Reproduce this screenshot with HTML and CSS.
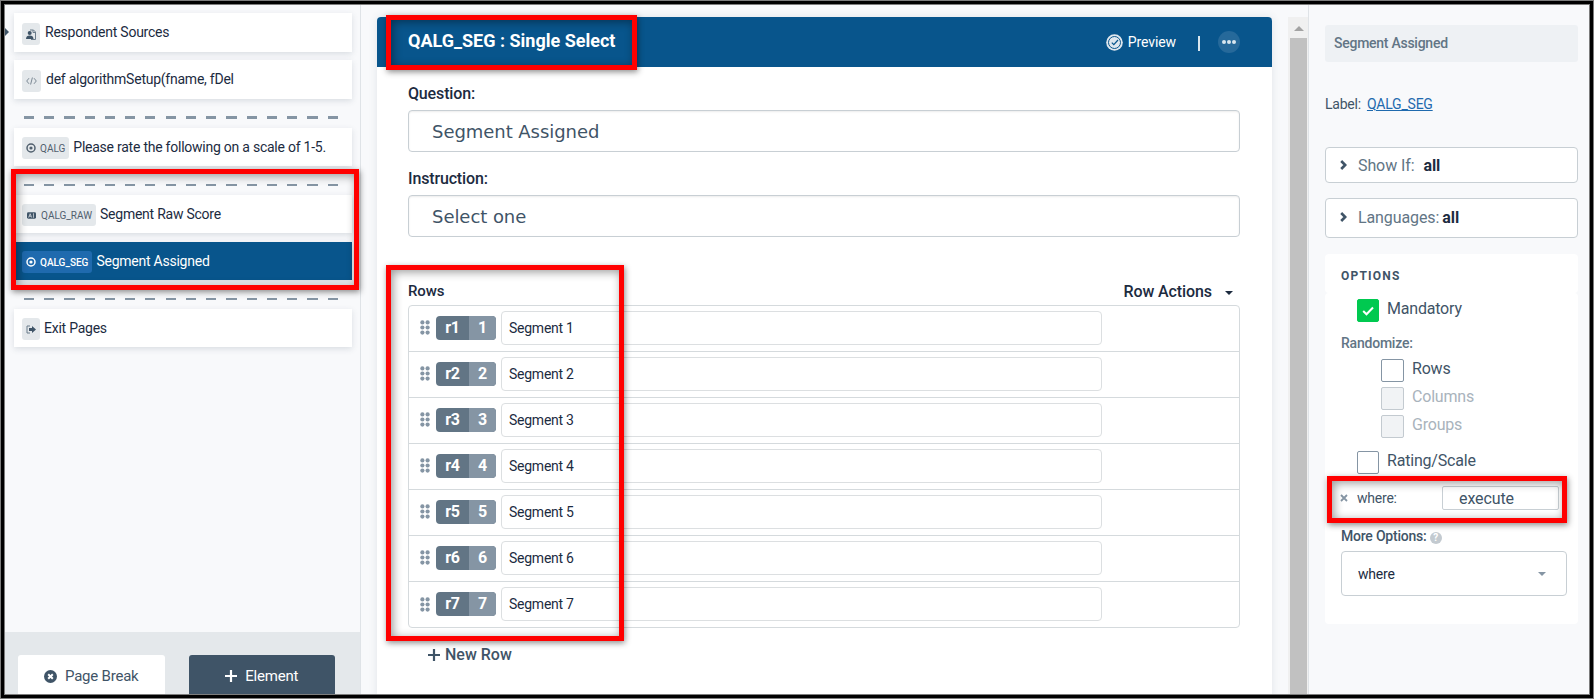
FILE: index.html
```
<!DOCTYPE html>
<html lang="en">
<head>
<meta charset="utf-8" />
<title>Survey Builder</title>
<link rel="stylesheet" href="styles.css">
</head>
<body>
<svg class="defs">
	<symbol id="radio" viewBox="0 0 10 10"><circle cx="5" cy="5" r="4" fill="none" stroke="currentColor" stroke-width="1.5"/><circle cx="5" cy="5" r="1.6" fill="currentColor"/></symbol>
	<symbol id="grip" viewBox="0 0 10 15"><g fill="#8595a4"><circle cx="2.4" cy="2.4" r="2.1"/><circle cx="7.6" cy="2.4" r="2.1"/><circle cx="2.4" cy="7.5" r="2.1"/><circle cx="7.6" cy="7.5" r="2.1"/><circle cx="2.4" cy="12.6" r="2.1"/><circle cx="7.6" cy="12.6" r="2.1"/></g></symbol>
	<symbol id="plus" viewBox="0 0 12 12"><path d="M6 0v12M0 6h12" stroke="currentColor" stroke-width="2.2"/></symbol>
	<symbol id="chevron" viewBox="0 0 7 10"><path d="M1.2 1l4 4-4 4" fill="none" stroke="#3f5467" stroke-width="2.6"/></symbol>
</svg>
<div class="app">
	<div class="sidebar">
		<div class="elements">
			<div class="card"><span class="tag icon-only"><svg width="10" height="11" viewBox="0 0 10 11"><path d="M4 1h3.5L9.5 3v7.5H5" fill="none" stroke="#6b7c8b"/><path d="M7 1v2.500h2.500" fill="none" stroke="#6b7c8b"/><circle cx="3.700" cy="4" r="2" fill="#3f5467"/><path d="M0 10c0-2.500 1.500-3.500 3.700-3.500S7.500 7.500 7.500 10z" fill="#3f5467"/></svg></span><span class="name">Respondent Sources</span></div>
			<div class="card gap"><span class="tag icon-only code"><svg width="11" height="8" viewBox="0 0 11 8"><path d="M3 1.200L.7 4 3 6.800M8 1.200L10.300 4 8 6.800M6.400.5l-1.800 7" fill="none" stroke="#7b8894"/></svg></span><span class="name">def algorithmSetup(fname, fDel</span></div>
			<div class="break thick"></div>
			<div class="card short"><span class="tag"><svg width="10" height="10"><use href="#radio"/></svg>QALG</span><span class="name">Please rate the following on a scale of 1-5.</span></div>
			<div class="break"></div>
			<div class="card short"><span class="tag raw"><svg width="9" height="7" viewBox="0 0 10 7"><rect width="10" height="7" rx="1.500" fill="#3f5467"/><path d="M1.800 5.800L3.500 1.500l1.700 4.300M2.500 4.300h2M7.200 1v5" fill="none" stroke="#e4e8eb" stroke-width=".8"/></svg>QALG_RAW</span><span class="name">Segment Raw Score</span></div>
			<div class="card short selected"><span class="tag"><svg width="10" height="10"><use href="#radio"/></svg>QALG_SEG</span><span class="name">Segment Assigned</span></div>
			<div class="break"></div>
			<div class="card short"><span class="tag icon-only"><svg width="10" height="9" viewBox="0 0 10 9"><path d="M4 1H1v7h3" fill="none" stroke="#6b7c8b"/><path d="M3 3h3V1l4 3.500L6 8V6H3z" fill="#3f5467"/></svg></span><span class="name">Exit Pages</span></div>
		</div>
		<div class="actions">
			<div class="btn"><svg width="13" height="13" viewBox="0 0 13 13"><circle cx="6.500" cy="6.500" r="6.500" fill="#3f5467"/><path d="M4.200 4.200l4.600 4.600M8.800 4.200L4.200 8.800" stroke="#fff" stroke-width="2"/></svg>Page Break</div>
			<div class="btn dark"><svg width="12" height="12"><use href="#plus"/></svg>Element</div>
		</div>
	</div>

	<div class="main">
		<div class="panel">
			<div class="panel-head">
				<div class="title">QALG_SEG : Single Select</div>
				<svg width="17" height="17" viewBox="0 0 17 17"><circle cx="8.500" cy="8.500" r="8.300" fill="#dfe7ee"/><circle cx="8.500" cy="8.500" r="6" fill="none" stroke="#08558c"/><path d="M5.800 8.700l2 2 4.200-4.700" fill="none" stroke="#08558c" stroke-width="1.200"/></svg>
				<div class="preview">Preview</div>
				<div class="bar"></div>
				<div class="more"><i></i><i></i><i></i></div>
			</div>
			<div class="panel-body">
				<div class="label">Question:</div>
				<div class="field">Segment Assigned</div>
				<div class="label second">Instruction:</div>
				<div class="field">Select one</div>
				<div class="rows-head"><span>Rows</span><span class="row-actions">Row Actions<i class="caret"></i></span></div>
				<div class="rows">
					<div class="row"><svg width="10" height="15"><use href="#grip"/></svg><div class="badge"><b>r1</b><b>1</b></div><div class="answer">Segment 1</div></div>
					<div class="row"><svg width="10" height="15"><use href="#grip"/></svg><div class="badge"><b>r2</b><b>2</b></div><div class="answer">Segment 2</div></div>
					<div class="row"><svg width="10" height="15"><use href="#grip"/></svg><div class="badge"><b>r3</b><b>3</b></div><div class="answer">Segment 3</div></div>
					<div class="row"><svg width="10" height="15"><use href="#grip"/></svg><div class="badge"><b>r4</b><b>4</b></div><div class="answer">Segment 4</div></div>
					<div class="row"><svg width="10" height="15"><use href="#grip"/></svg><div class="badge"><b>r5</b><b>5</b></div><div class="answer">Segment 5</div></div>
					<div class="row"><svg width="10" height="15"><use href="#grip"/></svg><div class="badge"><b>r6</b><b>6</b></div><div class="answer">Segment 6</div></div>
					<div class="row"><svg width="10" height="15"><use href="#grip"/></svg><div class="badge"><b>r7</b><b>7</b></div><div class="answer">Segment 7</div></div>
				</div>
				<div class="new-row"><svg width="12" height="12"><use href="#plus"/></svg>New Row</div>
			</div>
		</div>
		<div class="scrollbar"><i class="arrow"></i><div class="thumb"></div></div>
	</div>

	<div class="props">
		<div class="prop-title">Segment Assigned</div>
		<div class="prop-label">Label:<a>QALG_SEG</a></div>
		<div class="fold"><svg width="7" height="10"><use href="#chevron"/></svg>Show If:<b class="wide">all</b></div>
		<div class="fold tall"><svg width="7" height="10"><use href="#chevron"/></svg>Languages:<b>all</b></div>
		<div class="options-head">OPTIONS</div>
		<div class="options">
			<div class="check"><span class="box on"><svg width="12" height="10" viewBox="0 0 12 10"><path d="M1.200 5l3.300 3.300L11 1.500" fill="none" stroke="#fff" stroke-width="2"/></svg></span>Mandatory</div>
			<div class="randomize">Randomize:</div>
			<div class="check inner"><span class="box"></span>Rows</div>
			<div class="check inner off"><span class="box"></span>Columns</div>
			<div class="check inner off"><span class="box"></span>Groups</div>
			<div class="check rating"><span class="box"></span>Rating/Scale</div>
			<div class="where"><svg width="8" height="8" viewBox="0 0 8 8"><path d="M1 1l6 6M7 1L1 7" stroke="#8595a4" stroke-width="1.800"/></svg><span>where:</span><div class="execute">execute</div></div>
			<div class="more-options">More Options:<span class="help">?</span></div>
			<div class="select">where<i class="caret"></i></div>
		</div>
	</div>
</div>
<div class="mark mark-list"></div>
<div class="mark mark-title"></div>
<div class="mark mark-rows"></div>
<div class="mark mark-where"></div>
<div class="pointer"></div>
<div class="frame"></div>
</body>
</html>
```
FILE: styles.css
```
*{
	box-sizing: border-box;
}

body{
	margin: 0;
	height: 699px;
	overflow: hidden;
	position: relative;
	font-family: Roboto, "Liberation Sans", sans-serif;
	font-size: 14px;
	letter-spacing: -0.22px;
	color: #1c2b3f;
	background-color: #f8f9fb;
}

.defs{
	display: none;
}

svg{
	flex: none;
}

.app{
	display: grid;
	grid-template-columns: 361px 947px 1fr;
	height: 699px;
}

/* element list */
.sidebar{
	display: flex;
	flex-direction: column;
	border-right: 1px solid #dfe3e7;
}

.elements{
	flex: 1;
	padding: 13px 8px 0 14px;
}

.card{
	display: flex;
	align-items: flex-start;
	height: 39px;
	padding: 10px 8px 0;
	background-color: #fff;
	box-shadow: 0 2px 6px rgba(60, 80, 100, 0.16);
}

.card.gap{
	margin-top: 8px;
}

.card.short{
	height: 38px;
	padding-top: 9px;
}

.tag{
	display: flex;
	align-items: center;
	gap: 4px;
	height: 22px;
	padding: 0 4px;
	border-radius: 3px;
	background-color: #e4e8eb;
	color: #51606e;
	font-size: 10px;
	letter-spacing: 0;
}

.tag.raw{
	gap: 5px;
	padding-left: 5px;
}

.icon-only{
	width: 18px;
}

.icon-only.code{
	width: 19px;
}

.name{
	margin-left: 5px;
	line-height: 19px;
	letter-spacing: -0.24px;
	white-space: nowrap;
}

.short .name{
	margin-left: 4px;
	line-height: 21px;
}

.break{
	height: 2px;
	margin: 18px 14px 9px 10px;
	background: repeating-linear-gradient(90deg, #8595a4 0, #8595a4 10px, transparent 10px, transparent 20.25px);
}

.break.thick{
	height: 3px;
	margin-top: 17px;
}

.card.selected{
	margin-top: 9px;
	background-color: #08558c;
	color: #fff;
}

.selected .tag{
	background-color: #1f6aae;
	color: #fff;
	font-weight: 500;
}

.actions{
	display: flex;
	gap: 24px;
	height: 67px;
	padding: 23px 25px 0 18px;
	background-color: #e4e8eb;
}

.btn{
	flex: 1;
	display: flex;
	justify-content: center;
	gap: 8px;
	padding-top: 12px;
	border-radius: 3px 3px 0 0;
	background-color: #fff;
	color: #3f5467;
	font-size: 15px;
	line-height: 18px;
}

.btn svg{
	margin-top: 3px;
}

.btn.dark{
	background-color: #3f5467;
	color: #fff;
}

/* question editor */
.main{
	display: flex;
	justify-content: space-between;
	padding: 17px 0 0 16px;
}

.panel{
	width: 895px;
	border-radius: 4px 4px 0 0;
	background-color: #fff;
	box-shadow: 0 0 8px rgba(60, 80, 100, 0.12);
}

.panel-head{
	display: flex;
	align-items: center;
	height: 50px;
	padding: 0 32px 0 31px;
	border-radius: 4px 4px 0 0;
	background-color: #08558c;
	color: #fff;
}

.title{
	flex: 1;
	padding-bottom: 3px;
	font-size: 18px;
	font-weight: 700;
	letter-spacing: 0;
}

.preview{
	margin-left: 5px;
	font-size: 14px;
	letter-spacing: -0.1px;
}

.bar{
	width: 2px;
	height: 15px;
	margin: 3px 18px 0 22px;
	background-color: #d9e6ee;
}

.more{
	display: flex;
	align-items: center;
	justify-content: center;
	gap: 1px;
	width: 22px;
	height: 22px;
	border-radius: 50%;
	background-color: #26699a;
}

.more i{
	width: 4px;
	height: 4px;
	border-radius: 50%;
	background-color: #d9e6ee;
}

.panel-body{
	padding: 16px 32px 0 31px;
}

.label{
	height: 27px;
	font-size: 16px;
	font-weight: 500;
	letter-spacing: -0.15px;
	line-height: 21px;
}

.label.second{
	margin-top: 16px;
}

.field{
	height: 42px;
	padding-left: 23px;
	border: 1px solid #c8cfd4;
	border-radius: 4px;
	box-shadow: inset 0 1px 2px rgba(0, 0, 0, 0.08);
	color: #3f5467;
	font-family: "DejaVu Sans", sans-serif;
	font-size: 18px;
	letter-spacing: -0.05px;
	line-height: 41px;
}

.rows-head{
	display: flex;
	justify-content: space-between;
	height: 68px;
	padding-top: 44px;
	font-size: 15px;
	font-weight: 500;
	letter-spacing: -0.1px;
	line-height: 20px;
}

.row-actions{
	display: flex;
	font-size: 16px;
	line-height: 22px;
}

.caret{
	width: 0;
	height: 0;
	border: 4px solid transparent;
	border-top-color: currentColor;
	border-bottom: 0;
}

.row-actions .caret{
	margin: 10px 7px 0 13px;
}

.rows{
	border: 1px solid #d5dadd;
	border-radius: 4px;
}

.row{
	display: flex;
	align-items: center;
	height: 46px;
	padding: 0 0 2px 11px;
	border-bottom: 1px solid #d5dadd;
}

.row:last-child{
	height: 45px;
	padding-bottom: 1px;
	border-bottom: 0;
}

.badge{
	display: flex;
	width: 60px;
	height: 24px;
	margin: 0 5px 0 6px;
	border-radius: 4px;
	overflow: hidden;
	background-color: #627585;
	color: #fff;
	font-size: 16px;
	line-height: 23px;
	text-align: center;
}

.badge b{
	flex: 1;
}

.badge b + b{
	flex: 0 0 27px;
	background-color: #8595a4;
}

.answer{
	width: 601px;
	height: 34px;
	padding-left: 7px;
	border: 1px solid #dcdfe1;
	border-radius: 4px;
	letter-spacing: -0.25px;
	line-height: 32px;
}

.new-row{
	display: flex;
	align-items: center;
	gap: 5px;
	margin: 17px 0 0 20px;
	color: #3f5467;
	font-size: 16px;
	font-weight: 500;
	letter-spacing: 0;
	line-height: 20px;
}

.scrollbar{
	width: 20px;
	padding: 8px 1px 0 2px;
	background-color: #f0f0f0;
}

.arrow{
	display: block;
	width: 0;
	margin: 1px auto 0;
	border: 5px solid transparent;
	border-top: 0;
	border-bottom-color: #a3a3a3;
}

.thumb{
	height: 661px;
	margin-top: 7px;
	background-color: #c1c1c1;
}

/* element properties */
.props{
	padding: 25px 16px 0;
	border-left: 1px solid #dfe3e7;
	color: #3f5467;
}

.prop-title{
	height: 37px;
	padding-left: 9px;
	border-radius: 3px;
	background-color: #eef1f4;
	color: #627585;
	font-weight: 500;
	letter-spacing: -0.26px;
	line-height: 36px;
}

.prop-label{
	margin: 32px 0 33px;
	line-height: 20px;
}

.prop-label a{
	margin-left: 6px;
	color: #1f6aae;
	text-decoration: underline;
}

.fold{
	display: flex;
	align-items: center;
	height: 36px;
	padding-left: 14px;
	border: 1px solid #c8cfd4;
	border-radius: 4px;
	background-color: #fff;
	color: #627585;
	font-size: 16px;
	letter-spacing: -0.1px;
}

.fold svg{
	margin-right: 11px;
}

.fold b{
	margin-left: 3px;
	color: #1c2b3f;
}

.fold b.wide{
	margin-left: 9px;
}

.fold.tall{
	height: 40px;
	margin: 15px 0 16px;
	padding-bottom: 2px;
}

.fold.tall b{
	padding-top: 1px;
}

.options-head{
	height: 39px;
	padding: 12px 16px 0;
	border-radius: 4px;
	background-color: #fff;
	font-size: 12px;
	font-weight: 700;
	letter-spacing: 1.2px;
	line-height: 20px;
}

.options{
	height: 331px;
	padding: 6px 11px 0 16px;
	border-radius: 4px;
	background-color: #fff;
}

.check{
	display: flex;
	height: 28px;
	padding-left: 16px;
	font-size: 16px;
	letter-spacing: -0.2px;
	line-height: 19px;
}

.box{
	display: flex;
	align-items: center;
	justify-content: center;
	width: 22px;
	height: 23px;
	margin-right: 8px;
	border: 1px solid #8595a4;
	border-radius: 2px;
}

.box.on{
	border-color: #00c950;
	background-color: #00c950;
}

.inner{
	padding-left: 40px;
}

.inner .box{
	width: 23px;
}

.off{
	color: #a9b3bc;
}

.off .box{
	border-color: #c3cad0;
	background-color: #f1f3f5;
}

.randomize{
	height: 32px;
	padding-top: 6px;
	color: #627585;
	font-weight: 500;
	line-height: 20px;
}

.rating{
	margin-top: 8px;
}

.where{
	display: flex;
	align-items: center;
	height: 24px;
	margin-top: 7px;
	line-height: 24px;
}

.where svg{
	margin-left: -1px;
}

.where span{
	flex: 1;
	margin-left: 9px;
}

.execute{
	width: 117px;
	height: 24px;
	margin-right: 8px;
	padding-left: 16px;
	border: 1px solid #c8cfd4;
	border-radius: 2px;
	font-size: 16px;
	letter-spacing: -0.1px;
	line-height: 23px;
}

.more-options{
	display: flex;
	align-items: center;
	height: 20px;
	margin-top: 16px;
	font-weight: 500;
}

.help{
	width: 12px;
	height: 12px;
	margin: 3px 0 0 3px;
	border-radius: 50%;
	background-color: #c3cad0;
	color: #fff;
	font-size: 10px;
	font-weight: 700;
	line-height: 12px;
	text-align: center;
}

.select{
	display: flex;
	align-items: center;
	justify-content: space-between;
	height: 45px;
	margin-top: 5px;
	padding: 0 20px 0 16px;
	border: 1px solid #c8cfd4;
	border-radius: 4px;
	color: #1c2b3f;
}

.select .caret{
	color: #8595a4;
}

/* highlight boxes laid over the page */
.mark{
	position: absolute;
	border: 5px solid #f00;
	box-shadow: 1px 2px 6px rgba(0, 0, 0, 0.45), inset 2px 2px 10px rgba(0, 0, 0, 0.4);
}

.mark-list{
	left: 11px;
	top: 169px;
	width: 348px;
	height: 121px;
}

.mark-title{
	left: 386px;
	top: 15px;
	width: 251px;
	height: 55px;
}

.mark-rows{
	left: 386px;
	top: 265px;
	width: 238px;
	height: 376px;
}

.mark-where{
	left: 1327px;
	top: 476px;
	width: 240px;
	height: 47px;
}

.pointer{
	position: absolute;
	left: 4px;
	top: 27px;
	border: 5px solid transparent;
	border-left-color: #3f5467;
	border-right: 0;
}

/* window edge: grey, black, grey */
.frame{
	position: absolute;
	inset: 0;
	border: 1px solid #7d7d7d;
	box-shadow: inset 0 0 0 3px #000, inset 0 0 0 4px #7d7d7d;
}
```
